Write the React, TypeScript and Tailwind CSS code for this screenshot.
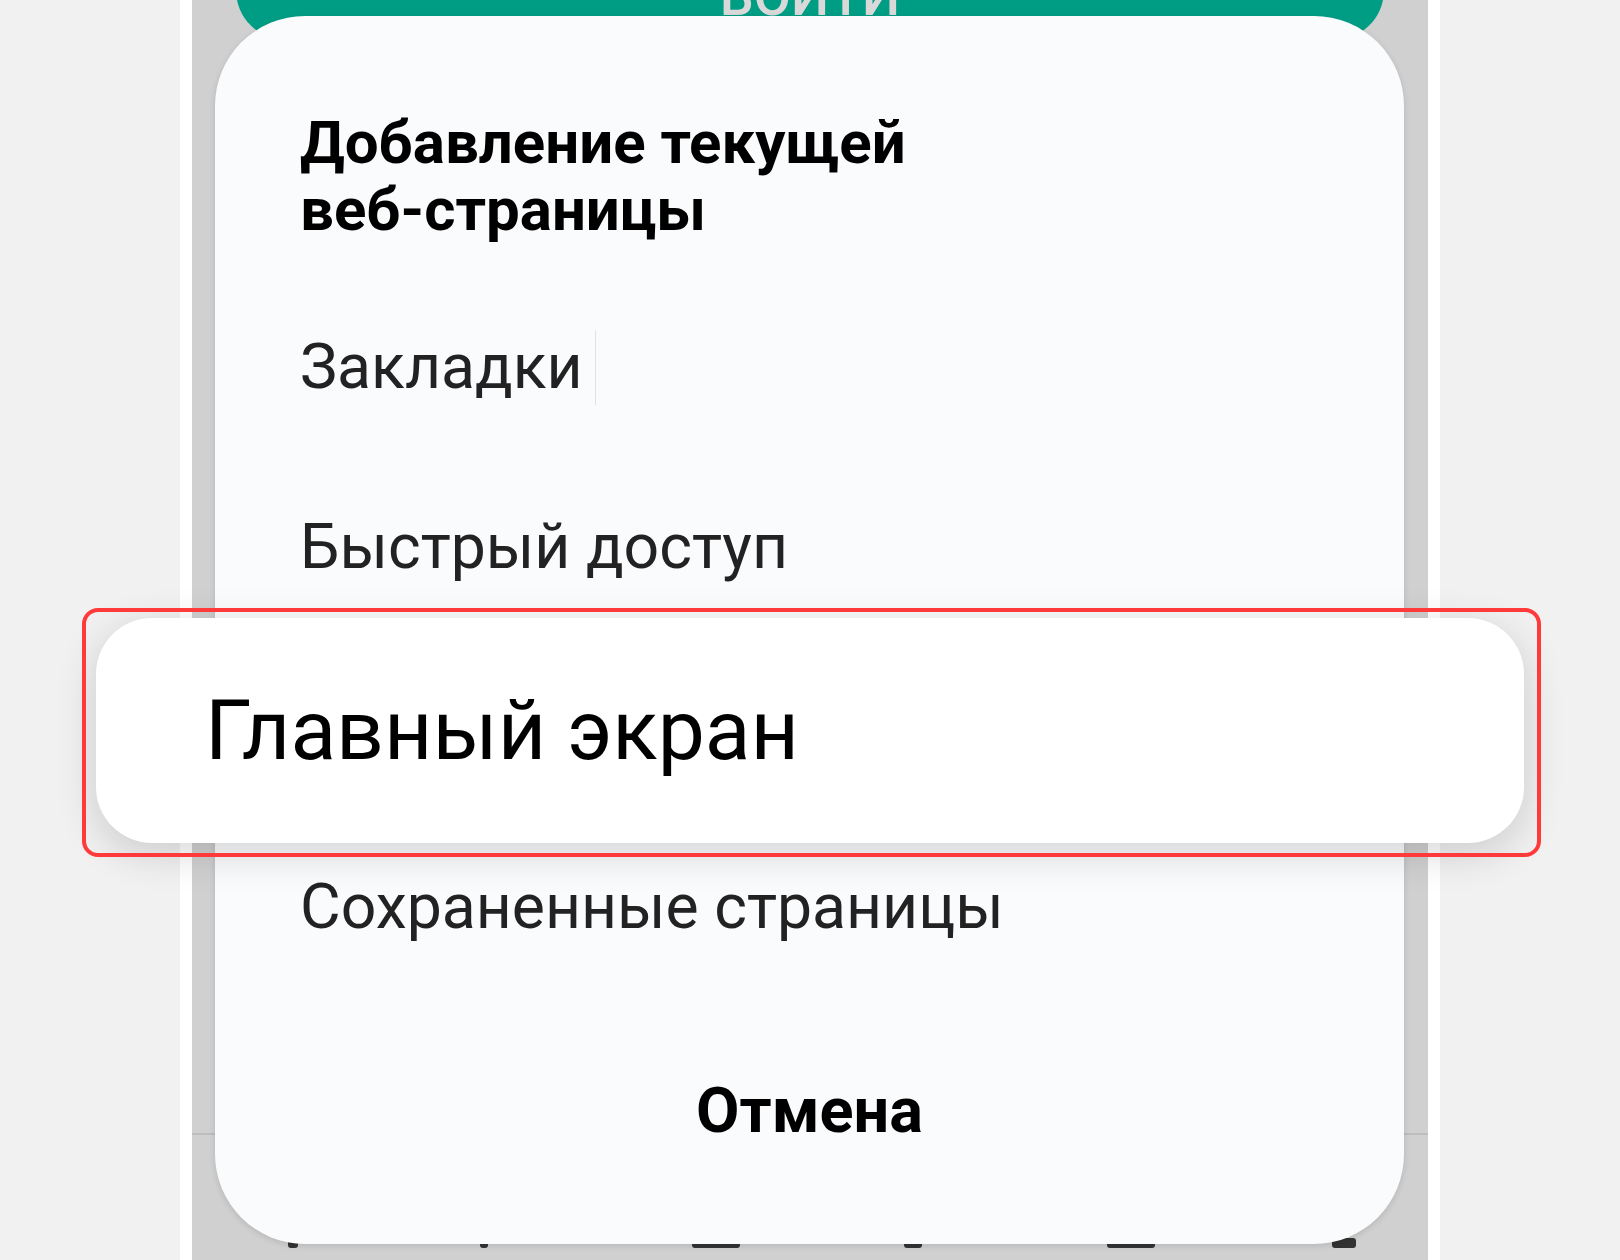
import React from 'react';

const items = ['Закладки', 'Быстрый доступ', 'Главный экран', 'Сохраненные страницы'];

// tops of the nav bar icons that peek out under the dialog
const navMarks = [
  { left: 'left-[96px]', w: 'w-[10px]' },
  { left: 'left-[288px]', w: 'w-[8px]' },
  { left: 'left-[500px]', w: 'w-[48px]' },
  { left: 'left-[712px]', w: 'w-[18px]' },
  { left: 'left-[915px]', w: 'w-[48px]' },
  { left: 'left-[1140px]', w: 'w-[24px]' },
];

export default function App() {
  return (
    <div className="relative w-[1620px] h-[1260px] overflow-hidden bg-[#f1f1f1] font-['Roboto','Noto_Sans',sans-serif]">
      {/* phone screenshot */}
      <div className="ml-[180px] w-[1260px] h-full bg-white px-[12px]">
        <div className="relative h-full bg-[#d0d0d0] flex flex-col overflow-hidden">
          <div className="mx-[44px] -mt-[60px] h-[100px] rounded-full bg-[#009d85] flex items-start justify-center pt-[30px]">
            <span className="text-[#d9d9d9] text-[54px] font-medium leading-none">ВОЙТИ</span>
          </div>
          <div className="flex-1" />
          <div className="relative h-[127px] border-t-2 border-[#bdbdbd]">
            {navMarks.map((m, i) => (
              <div key={i} className={`absolute top-[103px] h-[10px] rounded-[3px] bg-[#333] ${m.left} ${m.w}`} />
            ))}
          </div>

          {/* dialog */}
          <div className="absolute left-[23px] right-[24px] top-[16px] bottom-[16px] rounded-[90px] bg-[#fafbfd] shadow-[0_2px_6px_rgba(0,0,0,0.12)] flex flex-col pl-[85px] pt-[93px]">
            <h2 className="text-[60px] leading-[67px] font-bold text-black">
              Добавление текущей
              <br />
              веб-страницы
            </h2>
            <div className="mt-[34px] flex flex-col">
              {items.map((t, i) => (
                <div key={t} className={`h-[180px] text-[62.5px] leading-[180px] text-[#222] flex items-center ${i === 2 ? 'invisible' : ''}`}>
                  <span>{t}</span>
                  {i === 0 && <span className="ml-[12px] w-px h-[75px] bg-[#e2e2e2]" />}
                </div>
              ))}
            </div>
            <div className="-ml-[85px] mt-[64px] text-center text-[63px] leading-[100px] font-bold text-black">
              Отмена
            </div>
          </div>
        </div>
      </div>

      {/* magnified item */}
      <div className="absolute left-[96px] top-[618px] w-[1428px] h-[225px] rounded-[56px] bg-white shadow-[0_10px_40px_rgba(0,0,0,0.16)] flex items-center pl-[109px]">
        <span className="text-[84px] leading-none text-black">Главный экран</span>
      </div>
      <div className="absolute left-[82px] top-[608px] w-[1459px] h-[249px] rounded-[16px] border-4 border-[#ff3a3a]" />
    </div>
  );
}
